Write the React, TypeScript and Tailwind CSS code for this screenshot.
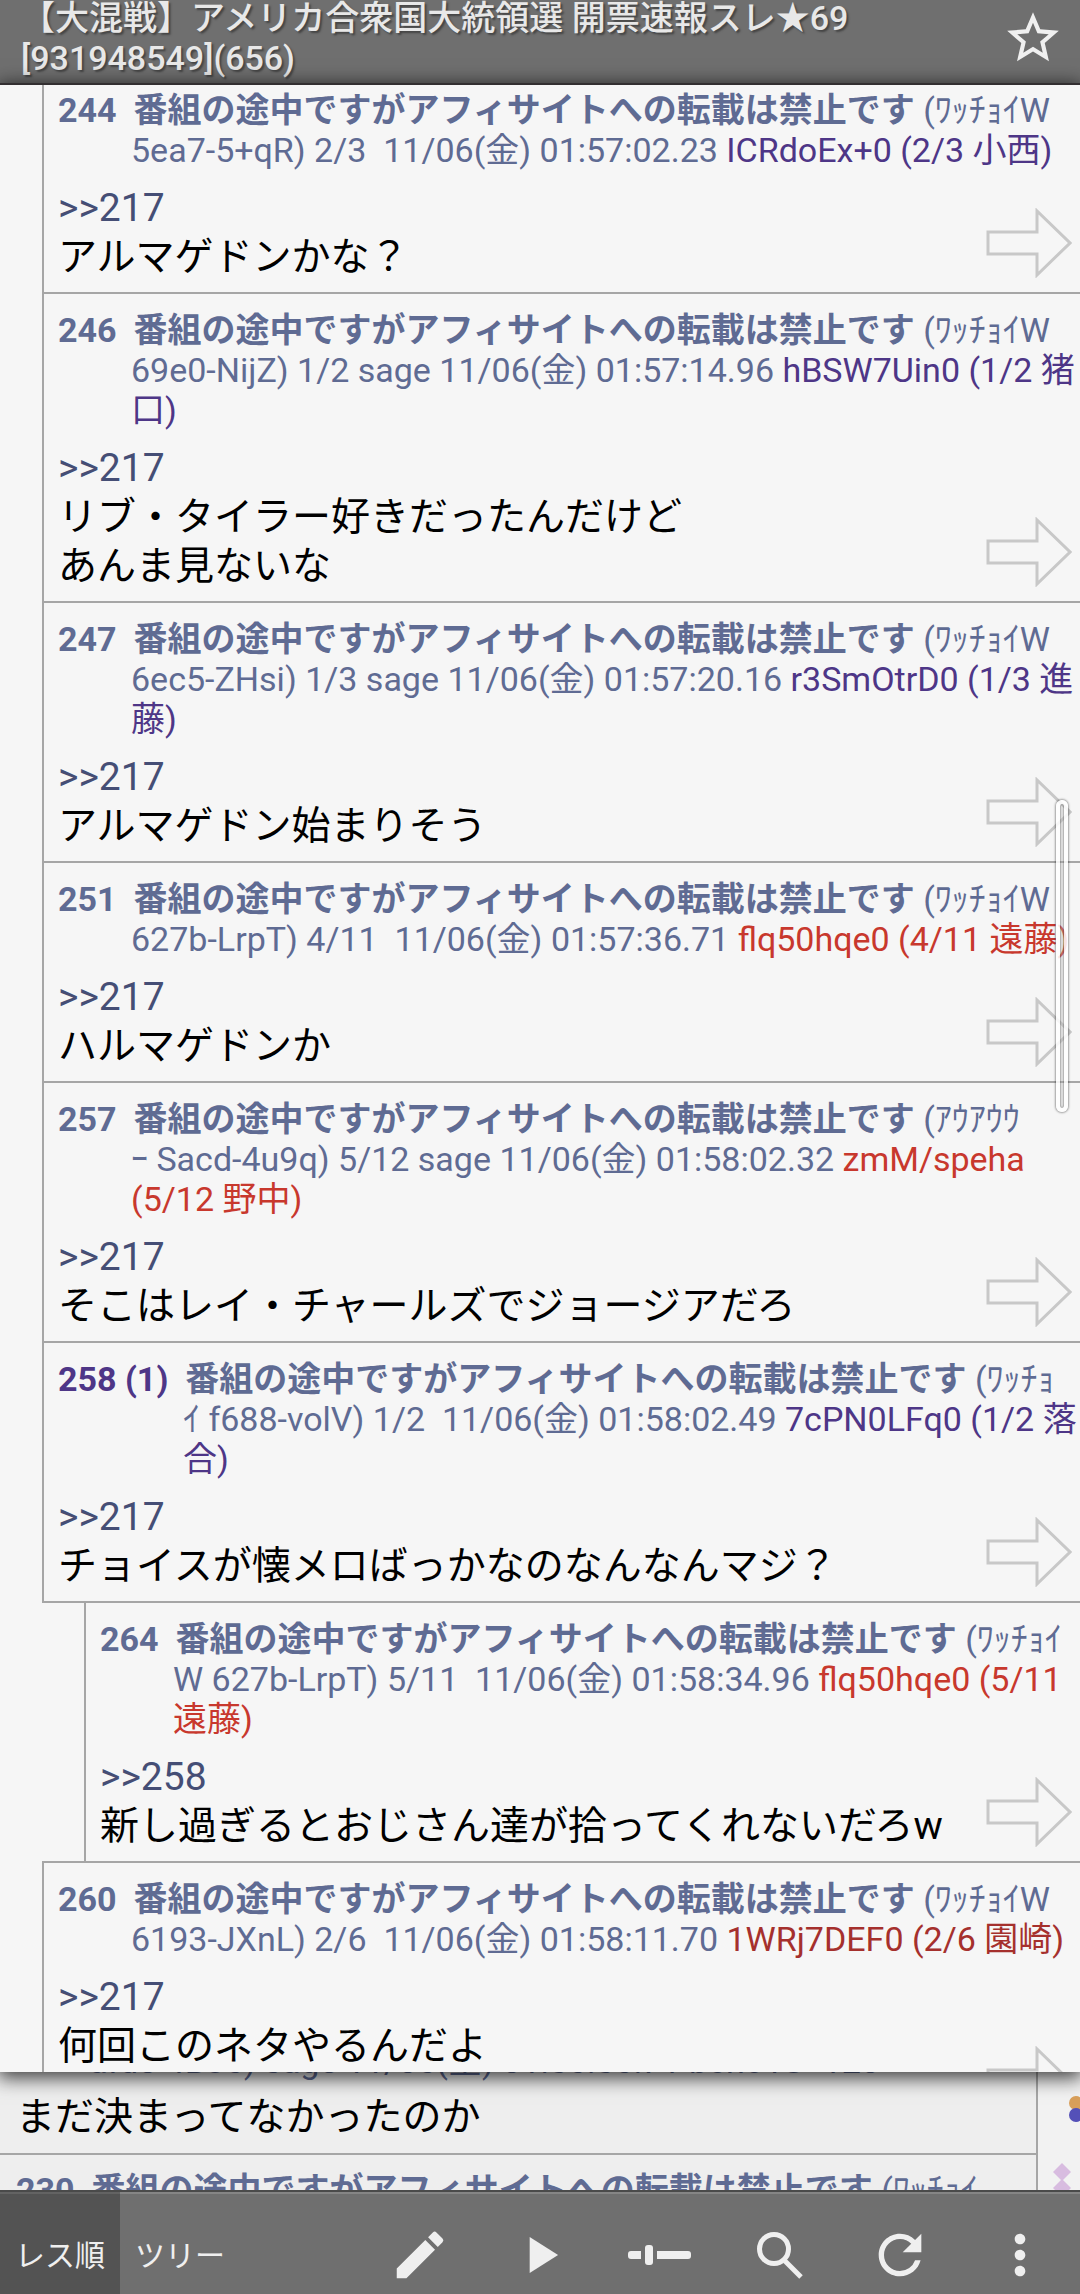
import React from 'react';
import { MdEdit, MdMoreVert, MdPlayArrow, MdRefresh, MdStarBorder } from 'react-icons/md';

type Post = {
  no: string;
  replies?: string;
  // each entry is one line of the header after the poster name
  meta: string[];
  id: string[];
  tone: 'purple' | 'red' | 'darkred';
  anchor: string;
  body: string[];
  nested?: boolean;
};

const POSTER = '番組の途中ですがアフィサイトへの転載は禁止です';

const toneClass = {
  purple: 'text-[#4e3687]',
  red: 'text-[#c8382d]',
  darkred: 'text-[#a5302d]',
};

const posts: Post[] = [
  {
    no: '244',
    meta: ['(ﾜｯﾁｮｲW', '5ea7-5+qR) 2/3  11/06(金) 01:57:02.23 '],
    id: ['ICRdoEx+0 (2/3 小西)'],
    tone: 'purple',
    anchor: '217',
    body: ['アルマゲドンかな？'],
  },
  {
    no: '246',
    meta: ['(ﾜｯﾁｮｲW', '69e0-NijZ) 1/2 sage 11/06(金) 01:57:14.96 '],
    id: ['hBSW7Uin0 (1/2 猪', '口)'],
    tone: 'purple',
    anchor: '217',
    body: ['リブ・タイラー好きだったんだけど', 'あんま見ないな'],
  },
  {
    no: '247',
    meta: ['(ﾜｯﾁｮｲW', '6ec5-ZHsi) 1/3 sage 11/06(金) 01:57:20.16 '],
    id: ['r3SmOtrD0 (1/3 進', '藤)'],
    tone: 'purple',
    anchor: '217',
    body: ['アルマゲドン始まりそう'],
  },
  {
    no: '251',
    meta: ['(ﾜｯﾁｮｲW', '627b-LrpT) 4/11  11/06(金) 01:57:36.71 '],
    id: ['flq50hqe0 (4/11 遠藤)'],
    tone: 'red',
    anchor: '217',
    body: ['ハルマゲドンか'],
  },
  {
    no: '257',
    meta: ['(ｱｳｱｳｳ', 'ｰ Sacd-4u9q) 5/12 sage 11/06(金) 01:58:02.32 '],
    id: ['zmM/speha', '(5/12 野中)'],
    tone: 'red',
    anchor: '217',
    body: ['そこはレイ・チャールズでジョージアだろ'],
  },
  {
    no: '258',
    replies: '(1)',
    meta: ['(ﾜｯﾁｮ', 'ｲ f688-volV) 1/2  11/06(金) 01:58:02.49 '],
    id: ['7cPN0LFq0 (1/2 落', '合)'],
    tone: 'purple',
    anchor: '217',
    body: ['チョイスが懐メロばっかなのなんなんマジ？'],
  },
  {
    no: '264',
    meta: ['(ﾜｯﾁｮｲ', 'W 627b-LrpT) 5/11  11/06(金) 01:58:34.96 '],
    id: ['flq50hqe0 (5/11', '遠藤)'],
    tone: 'red',
    anchor: '258',
    body: ['新し過ぎるとおじさん達が拾ってくれないだろw'],
    nested: true,
  },
  {
    no: '260',
    meta: ['(ﾜｯﾁｮｲW', '6193-JXnL) 2/6  11/06(金) 01:58:11.70 '],
    id: ['1WRj7DEF0 (2/6 園崎)'],
    tone: 'darkred',
    anchor: '217',
    body: ['何回このネタやるんだよ', ''],
  },
];

function ArrowIcon() {
  return (
    <svg width="86" height="70" viewBox="0 0 86 70" fill="none" stroke="#c8c8c8" strokeWidth="3">
      <path d="M2 24H51V3L84 35L51 67V46H2Z" />
    </svg>
  );
}

function PostItem({ post }: { post: Post }) {
  return (
    <li
      className={`relative -mt-[2px] border-y-2 border-[#a6a6a6] pt-4 pb-[10px] ${
        post.nested ? 'ml-[42px]' : ''
      }`}
    >
      {/* tree line */}
      <div className="absolute inset-y-0 left-0 w-[2px] bg-[#a6a6a6]" />
      <div className="pl-4">
        <p
          className={`whitespace-pre text-[34px] leading-[40px] text-[#5f6b93] ${
            post.replies ? 'pl-[125px] -indent-[125px]' : 'pl-[73px] -indent-[73px]'
          }`}
        >
          <a href={`#${post.no}`} className={`font-bold ${post.replies ? 'text-[#4e3687]' : ''}`}>
            {post.no}
            {post.replies && ` ${post.replies}`}
          </a>
          <b>{'  '}{POSTER}</b> {post.meta.map((line, i) => (
            <React.Fragment key={i}>
              {i > 0 && '\n'}
              {line}
            </React.Fragment>
          ))}
          <a href={`#id-${post.no}`} className={toneClass[post.tone]}>
            {post.id.map((line, i) => (
              <React.Fragment key={i}>
                {i > 0 && '\n'}
                <span>{line}</span>
              </React.Fragment>
            ))}
          </a>
        </p>
        <div className="mt-[14px] text-[39px] leading-[49px]">
          <a href={`#${post.anchor}`} className="text-[#454e75]">
            &gt;&gt;{post.anchor}
          </a>
          {post.body.map((line, i) => (
            <p key={i} className="min-h-[49px]">{line}</p>
          ))}
        </div>
      </div>
      <button aria-label="返信先へ" className="absolute right-2 bottom-[14px]">
        <ArrowIcon />
      </button>
    </li>
  );
}

function ThreadBehind() {
  return (
    <div className="absolute inset-0 flex bg-[#eee]">
      <div className="flex flex-1 flex-col justify-end overflow-hidden">
        <div className="border-b-2 border-[#a6a6a6] pb-[11px] pl-4">
          <p className="whitespace-pre pl-[73px] text-[34px] leading-[40px] text-[#5f6b93]">
            afde-4B36) sage 11/06(金) 01:56:56.71 bcho1S+120
          </p>
          <p className="mt-3 text-[39px] leading-[49px]">まだ決まってなかったのか</p>
        </div>
        <div className="h-[35px] overflow-hidden pt-[15px] pl-4">
          <p className="whitespace-pre text-[34px] leading-[40px] text-[#5f6b93]">
            <b>230{'  '}{POSTER}</b> (ﾜｯﾁｮｲ
          </p>
        </div>
      </div>
      <div className="flex w-[44px] items-end overflow-hidden border-l-2 border-[#a6a6a6] bg-[#f2f2f2]">
        <svg width="42" height="118" viewBox="0 0 42 118">
          <circle cx="38" cy="31" r="7" fill="#d9a05b" />
          <circle cx="38" cy="43" r="7" fill="#5450b8" />
          <path d="M24 91L33 100L24 109L15 100Z" fill="#d8bce0" />
          <path d="M24 107L33 116L24 125L15 116Z" fill="#d8bce0" />
        </svg>
      </div>
    </div>
  );
}

function SliderIcon() {
  return (
    <svg width="64" height="20" viewBox="0 0 64 20" fill="#efefef">
      <path d="M3 6H13V14H3Q0 14 0 11V9Q0 6 3 6Z" />
      <rect x="17" y="0" width="8" height="20" rx="3" />
      <path d="M29 6H60Q63 6 63 9V11Q63 14 60 14H29Z" />
    </svg>
  );
}

function SearchIcon() {
  return (
    <svg width="48" height="48" viewBox="0 0 48 48" fill="none" stroke="#efefef">
      <circle cx="18" cy="18" r="14.5" strokeWidth="5" />
      <path d="M29 30L45 46" strokeWidth="5" />
    </svg>
  );
}

function ToolButton({ label, children }: { label: string; children: React.ReactNode }) {
  return (
    <button aria-label={label} className="flex items-center justify-center pt-6 text-[#efefef]">
      {children}
    </button>
  );
}

export default function App() {
  return (
    <div
      lang="ja"
      className="flex h-screen flex-col overflow-hidden bg-[#eee] font-['Roboto','Noto_Sans_CJK_JP',sans-serif] text-black"
    >
      <header className="flex h-[83px] items-center bg-[#6f6f6f] pb-[7px] pl-[21px] text-[#e8e8e8]">
        <h1 className="flex-1 text-[34px] leading-[40px] font-medium [text-shadow:2px_2px_2px_#444]">
          【大混戦】アメリカ合衆国大統領選 開票速報スレ★69
          <br />
          [931948549](656)
        </h1>
        <button aria-label="お気に入り" className="flex w-[94px] justify-center text-[#f0f0f0]">
          <MdStarBorder size={62} />
        </button>
      </header>

      <main className="relative flex-1">
        <ThreadBehind />
        <section className="absolute inset-x-0 top-0 bottom-[118px] border-t-2 border-[#332f31] bg-[#f6f6f6] shadow-[0_4px_18px_2px_rgba(0,0,0,0.75)]">
          <div className="h-full overflow-hidden">
            <ul className="-mt-[13px] pl-[42px]">
              {posts.map((post) => (
                <PostItem key={post.no} post={post} />
              ))}
            </ul>
          </div>
          {/* fast scroll thumb */}
          <div className="absolute top-[715px] right-3 h-[312px] w-3 rounded-full border-4 border-white/80 bg-[#f6f6f6]/30 shadow-[0_0_2px_1px_rgba(0,0,0,0.35),inset_0_0_2px_1px_rgba(0,0,0,0.35)]" />
        </section>
      </main>

      <nav className="relative grid h-[104px] grid-cols-9 border-t-2 border-[#4a4a4a] bg-[#6f6f6f] text-[30px] text-[#efefef] shadow-[inset_0_2px_0_#858585]">
        <button className="bg-black/25 pt-6">レス順</button>
        <button className="pt-6">ツリー</button>
        <span />
        <ToolButton label="書き込み">
          <MdEdit size={62} />
        </ToolButton>
        <ToolButton label="再生">
          <MdPlayArrow size={62} />
        </ToolButton>
        <ToolButton label="位置">
          <SliderIcon />
        </ToolButton>
        <ToolButton label="検索">
          <SearchIcon />
        </ToolButton>
        <ToolButton label="更新">
          <MdRefresh size={64} />
        </ToolButton>
        <ToolButton label="メニュー">
          <MdMoreVert size={64} />
        </ToolButton>
      </nav>
    </div>
  );
}
